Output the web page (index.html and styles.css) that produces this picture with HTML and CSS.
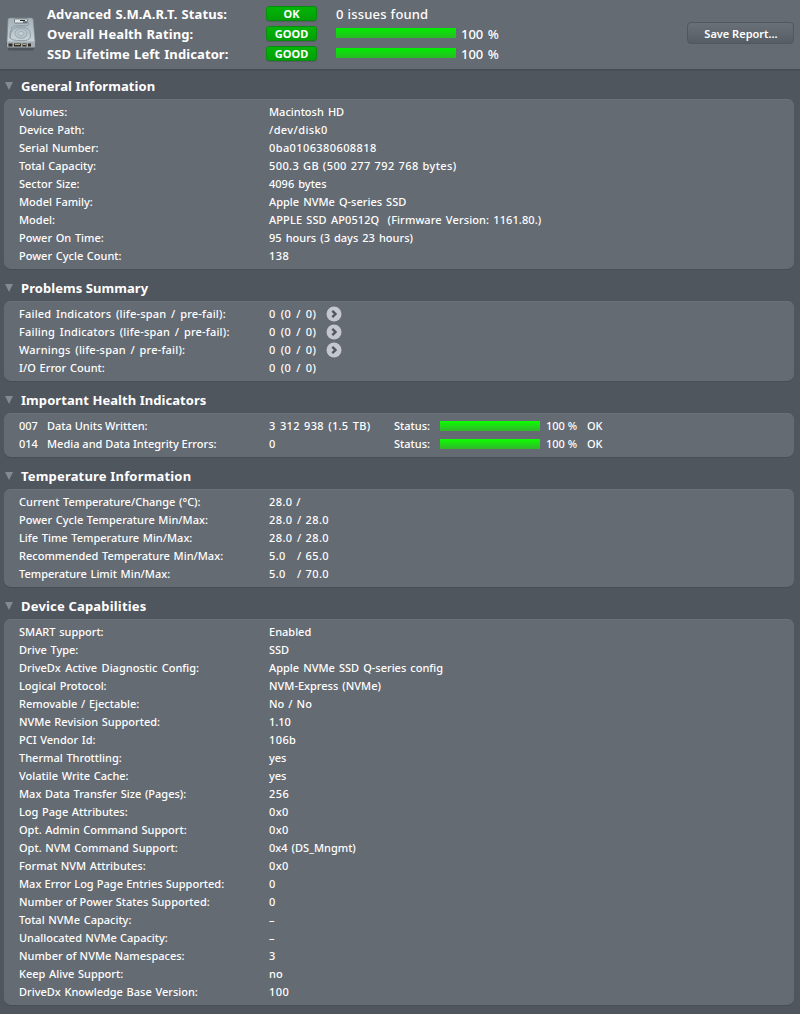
FILE: index.html
```html
<!DOCTYPE html>
<html lang="en">

<head>
    <meta charset="UTF-8">
    <meta name="viewport" content="width=device-width, initial-scale=1.0">
    <link rel="stylesheet" href="styles.css">
    <title>DriveDx - Drive Report</title>
</head>

<body>
    <header class="summary">
        <svg class="drive-icon" viewBox="0 0 32 38" aria-hidden="true">
            <defs>
                <linearGradient id="case" x1="0" y1="0" x2="0" y2="1">
                    <stop offset="0" stop-color="#a4b1b9" />
                    <stop offset="1" stop-color="#c9d5da" />
                </linearGradient>
            </defs>
            <path d="M1 29h29l-1 6q0 1.500-2 1.500H5q-2 0-2-1.500z" fill="#353a40" opacity=".45" />
            <path d="M4.500 4h22q1.500 0 1.700 1.500L30 28H2L3 5.500Q3 4 4.500 4z" fill="url(#case)" stroke="#7b8790" stroke-width=".6" />
            <path d="M2 28h28v4.500q0 1-1 1H3q-1 0-1-1z" fill="#a5adb1" />
            <path d="M3.500 29.500h4v3h-4zM9 29.500h7v3H9zM17.500 29.500h4v3h-4zM23 29.500h3v3h-3z" fill="#332f28" />
            <path d="M10 30.500h5M18 30.500h3" stroke="#b5aa89" />
            <rect x="9.500" y="5" width="13" height="4" rx=".7" fill="#e1e6e8" stroke="#59636a" stroke-width=".7" />
            <path d="M15 6.500h5M18 8h4" stroke="#242a2f" />
            <path d="M6 14q4-3 8-2.300h8q3-1 1.500-3M5 24Q5 14 14 13q11-1 11.500 8 0 5-5 5.500h-9Q6 26 5 24M7 14Q4 18 5 24" fill="none" stroke="#83909a" stroke-width=".8" />
            <ellipse cx="16" cy="19.500" rx="6" ry="4.800" fill="#b7c4ca" stroke="#8e9ba3" stroke-width=".7" />
            <ellipse cx="16" cy="19.500" rx="2.800" ry="2.200" fill="#c3ced4" stroke="#93a0a8" stroke-width=".6" />
        </svg>
        <div class="ratings">
            <div class="rating">
                <span class="rating-label">Advanced S.M.A.R.T. Status:</span>
                <span class="badge">OK</span>
                <span class="issues">0 issues found</span>
            </div>
            <div class="rating">
                <span class="rating-label">Overall Health Rating:</span>
                <span class="badge">GOOD</span>
                <span class="bar"></span>
                <span class="percent">100 %</span>
            </div>
            <div class="rating">
                <span class="rating-label">SSD Lifetime Left Indicator:</span>
                <span class="badge">GOOD</span>
                <span class="bar"></span>
                <span class="percent">100 %</span>
            </div>
        </div>
        <button type="button" class="save-button">Save Report...</button>
    </header>

    <main>
        <section>
            <h2>General Information</h2>
            <dl class="panel">
                <div class="row"><dt>Volumes:</dt><dd>Macintosh HD</dd></div>
                <div class="row"><dt>Device Path:</dt><dd class="numeric">/dev/disk0</dd></div>
                <div class="row"><dt>Serial Number:</dt><dd class="numeric">0ba0106380608818</dd></div>
                <div class="row"><dt>Total Capacity:</dt><dd class="numeric">500.3 GB (500 277 792 768 bytes)</dd></div>
                <div class="row"><dt>Sector Size:</dt><dd>4096 bytes</dd></div>
                <div class="row"><dt>Model Family:</dt><dd>Apple NVMe Q-series SSD</dd></div>
                <div class="row"><dt>Model:</dt><dd class="model">APPLE SSD AP0512Q  (Firmware Version: 1161.80.)</dd></div>
                <div class="row"><dt>Power On Time:</dt><dd>95 hours (3 days 23 hours)</dd></div>
                <div class="row"><dt>Power Cycle Count:</dt><dd class="numeric">138</dd></div>
            </dl>
        </section>

        <section class="problems">
            <h2>Problems Summary</h2>
            <dl class="panel">
                <div class="row">
                    <dt>Failed Indicators (life-span / pre-fail):</dt><dd class="count">0 (0 / 0)</dd>
                    <svg class="go" viewBox="0 0 16 16"><circle cx="8" cy="8" r="7.500" /><path d="M6.300 4.800 9.500 8l-3.200 3.200" /></svg>
                </div>
                <div class="row">
                    <dt>Failing Indicators (life-span / pre-fail):</dt><dd class="count">0 (0 / 0)</dd>
                    <svg class="go" viewBox="0 0 16 16"><circle cx="8" cy="8" r="7.500" /><path d="M6.300 4.800 9.500 8l-3.200 3.200" /></svg>
                </div>
                <div class="row">
                    <dt>Warnings (life-span / pre-fail):</dt><dd class="count">0 (0 / 0)</dd>
                    <svg class="go" viewBox="0 0 16 16"><circle cx="8" cy="8" r="7.500" /><path d="M6.300 4.800 9.500 8l-3.200 3.200" /></svg>
                </div>
                <div class="row"><dt class="io">I/O Error Count:</dt><dd class="count">0 (0 / 0)</dd></div>
            </dl>
        </section>

        <section>
            <h2>Important Health Indicators</h2>
            <dl class="panel">
                <div class="row">
                    <dt class="attr"><span class="attr-id">007</span>Data Units Written:</dt><dd class="raw">3 312 938 (1.5 TB)</dd>
                    <dd class="status">Status:</dd><dd class="bar"></dd><dd class="score">100 %</dd><dd>OK</dd>
                </div>
                <div class="row">
                    <dt class="attr"><span class="attr-id">014</span>Media and Data Integrity Errors:</dt><dd class="raw">0</dd>
                    <dd class="status">Status:</dd><dd class="bar"></dd><dd class="score">100 %</dd><dd>OK</dd>
                </div>
            </dl>
        </section>

        <section>
            <h2 class="loose">Temperature Information</h2>
            <dl class="panel">
                <div class="row"><dt>Current Temperature/Change (°C):</dt><dd class="numeric">28.0 /</dd></div>
                <div class="row"><dt>Power Cycle Temperature Min/Max:</dt><dd class="numeric"><span class="min">28.0</span>/ 28.0</dd></div>
                <div class="row"><dt>Life Time Temperature Min/Max:</dt><dd class="numeric"><span class="min">28.0</span>/ 28.0</dd></div>
                <div class="row"><dt>Recommended Temperature Min/Max:</dt><dd class="numeric"><span class="min">5.0</span>/ 65.0</dd></div>
                <div class="row"><dt>Temperature Limit Min/Max:</dt><dd class="numeric"><span class="min">5.0</span>/ 70.0</dd></div>
            </dl>
        </section>

        <section>
            <h2 class="loose">Device Capabilities</h2>
            <dl class="panel">
                <div class="row"><dt>SMART support:</dt><dd>Enabled</dd></div>
                <div class="row"><dt>Drive Type:</dt><dd>SSD</dd></div>
                <div class="row"><dt class="config">DriveDx Active Diagnostic Config:</dt><dd>Apple NVMe SSD Q-series config</dd></div>
                <div class="row"><dt>Logical Protocol:</dt><dd>NVM-Express (NVMe)</dd></div>
                <div class="row"><dt>Removable / Ejectable:</dt><dd>No / No</dd></div>
                <div class="row"><dt>NVMe Revision Supported:</dt><dd>1.10</dd></div>
                <div class="row"><dt>PCI Vendor Id:</dt><dd class="numeric">106b</dd></div>
                <div class="row"><dt>Thermal Throttling:</dt><dd>yes</dd></div>
                <div class="row"><dt>Volatile Write Cache:</dt><dd>yes</dd></div>
                <div class="row"><dt>Max Data Transfer Size (Pages):</dt><dd class="numeric">256</dd></div>
                <div class="row"><dt>Log Page Attributes:</dt><dd class="numeric">0x0</dd></div>
                <div class="row"><dt>Opt. Admin Command Support:</dt><dd class="numeric">0x0</dd></div>
                <div class="row"><dt>Opt. NVM Command Support:</dt><dd>0x4 (DS_Mngmt)</dd></div>
                <div class="row"><dt>Format NVM Attributes:</dt><dd class="numeric">0x0</dd></div>
                <div class="row"><dt class="tight">Max Error Log Page Entries Supported:</dt><dd>0</dd></div>
                <div class="row"><dt class="tight">Number of Power States Supported:</dt><dd>0</dd></div>
                <div class="row"><dt>Total NVMe Capacity:</dt><dd>–</dd></div>
                <div class="row"><dt class="tight">Unallocated NVMe Capacity:</dt><dd>–</dd></div>
                <div class="row"><dt class="tight">Number of NVMe Namespaces:</dt><dd>3</dd></div>
                <div class="row"><dt>Keep Alive Support:</dt><dd>no</dd></div>
                <div class="row"><dt>DriveDx Knowledge Base Version:</dt><dd class="numeric">100</dd></div>
            </dl>
        </section>
    </main>
</body>

</html>
```
FILE: styles.css
```css
* {
    margin: 0;
    padding: 0;
    box-sizing: border-box;
}

body {
    font-family: 'Lucida Grande', 'Noto Sans', 'Open Sans', sans-serif;
    font-size: 11px;
    font-weight: 500;
    background-color: #50565e;
    color: #ffffff;
    height: 1014px;
    overflow: hidden;
}

/* Header */
.summary {
    display: flex;
    align-items: flex-start;
    height: 71px;
    padding: 4px 6px 0 5px;
    background-color: #656b73;
    border-bottom: 2px solid #484e55;
}

.drive-icon {
    width: 32px;
    height: 38px;
    margin: 10px 10px 0 0;
}

.ratings {
    flex: 1;
    font-size: 13px;
}

.rating {
    display: flex;
    align-items: center;
    height: 20px;
}

.rating-label {
    width: 219px;
    font-weight: 700;
    letter-spacing: 0.1px;
    word-spacing: 0.6px;
    white-space: nowrap;
}

.issues {
    letter-spacing: 0.15px;
    word-spacing: 0.5px;
}

.badge {
    width: 51px;
    height: 15px;
    margin: 0 19px 1px 0;
    border: 1px solid #078d0c;
    border-radius: 3px;
    background: linear-gradient(#02b507, #049f08);
    box-shadow: 0 1px 0 #555f61;
    font-size: 11px;
    font-weight: 700;
    line-height: 14px;
    text-align: center;
}

.bar {
    background: linear-gradient(#00ee00, #28bd25);
}

.rating .bar {
    width: 120px;
    height: 10px;
    margin: 0 5px 2px 0;
}

.percent {
    word-spacing: 1px;
}

.save-button {
    width: 107px;
    height: 22px;
    margin-top: 18px;
    padding: 1px 0 0 1px;
    border: 1px solid #50575f;
    border-radius: 4px;
    background: linear-gradient(#6a7078, #575d65);
    color: #ffffff;
    font: inherit;
    font-weight: 650;
    line-height: 20px;
}

/* Sections */
main {
    display: flex;
    flex-direction: column;
    gap: 6px;
    padding: 2px 6px 0 4px;
}

h2 {
    display: flex;
    align-items: center;
    gap: 7px;
    height: 26px;
    padding-left: 1px;
    font-size: 13px;
    font-weight: 700;
    letter-spacing: 0.06px;
}

h2.loose {
    letter-spacing: 0.18px;
}

/* Disclosure triangle */
h2::before {
    content: '';
    margin-right: 1px;
    border: 4px solid transparent;
    border-top: 8px solid #858a91;
    border-bottom: 0;
}

.panel {
    padding: 4px 15px;
    border-radius: 7px;
    background-color: #656b73;
    box-shadow: inset 0 1px 0 #6c7279, 0 1px 0 #484e55;
}

.row {
    display: flex;
    align-items: center;
    height: 18px;
    white-space: pre;
}

dt {
    width: 250px;
    padding-bottom: 2px;
    word-spacing: 0.8px;
}

dd {
    padding-bottom: 2px;
    word-spacing: 1.2px;
}

dt.tight {
    word-spacing: 0.3px;
}

dt.config {
    word-spacing: 1.6px;
}

.problems dt {
    letter-spacing: 0.2px;
    word-spacing: 1.6px;
}

.problems dt.io {
    letter-spacing: 0;
    word-spacing: 1px;
}

.attr {
    word-spacing: 0;
}

.attr-id {
    display: inline-block;
    width: 28px;
}

.numeric {
    letter-spacing: 0.4px;
    word-spacing: 0.6px;
}

.model {
    letter-spacing: 0.1px;
}

.count {
    width: 57px;
    letter-spacing: 0.45px;
    word-spacing: 1.6px;
}

.go {
    width: 16px;
    height: 16px;
}

.go circle {
    fill: #c5c7ce;
}

.go path {
    fill: none;
    stroke: #50565e;
    stroke-width: 2.4;
}

.raw {
    width: 125px;
    letter-spacing: 0.3px;
}

.status {
    width: 46px;
}

.row .bar {
    width: 100px;
    height: 10px;
    margin-right: 6px;
    padding: 0;
    background: linear-gradient(#0cff00, #32b52c);
}

.score {
    width: 41px;
    word-spacing: 0;
}

.min {
    display: inline-block;
    width: 28px;
}
```
